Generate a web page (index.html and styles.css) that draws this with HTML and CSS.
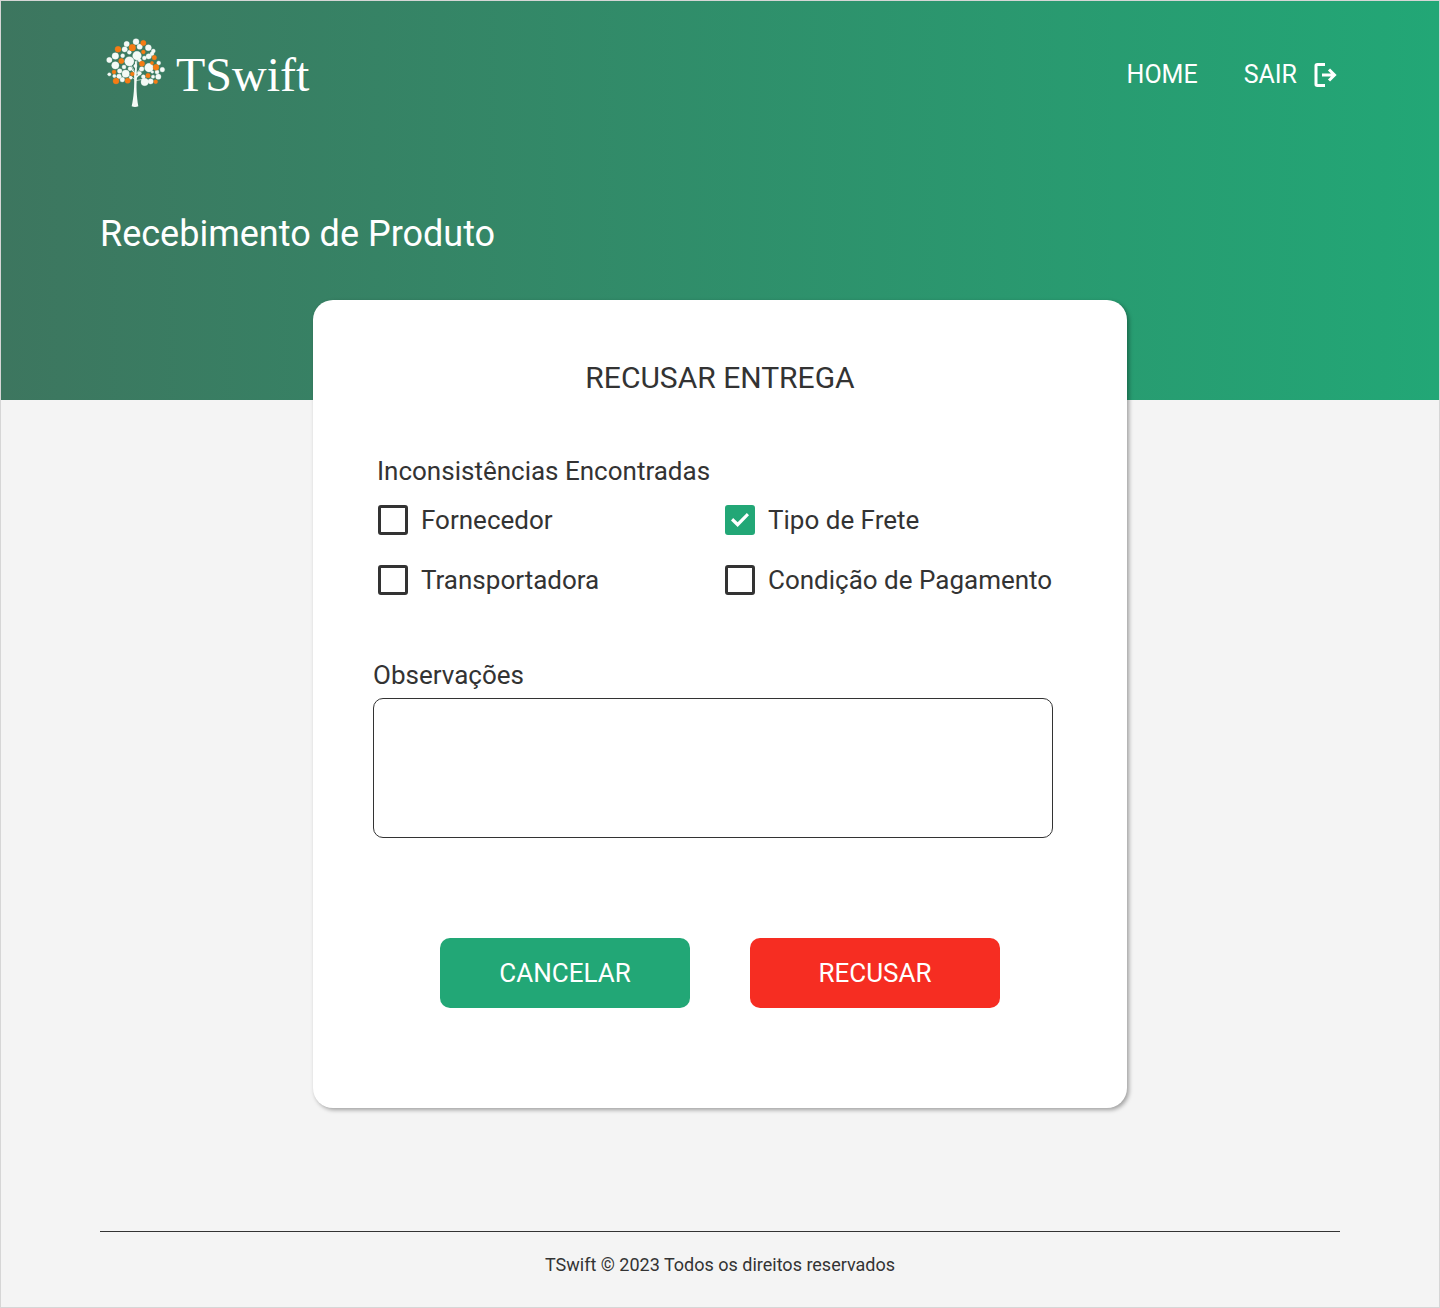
FILE: index.html
```html
<!DOCTYPE html>
<html lang="pt-BR">
<head>
  <meta charset="utf-8">
  <meta name="viewport" content="width=device-width, initial-scale=1">
  <title>TSwift - Recebimento de Produto</title>
  <link rel="stylesheet" href="styles.css">
</head>
<body>
  <header class="hero">
    <div class="topbar">
      <a class="brand" href="#">
        <svg class="brand-tree" viewBox="0 9 210 228" aria-hidden="true">
          <path class="trunk" d="M102 122c2 34-1 68-7 95 6 3 14 3 20 0-5-30-7-62-4-86l14-14-3-3-12 12V82h-5v34L92 98l-3 3 13 16z"/>
          <path class="twigs" d="M105 136L78 119M107 140l26-5M106 122l20-24M104 113L88 84M108 112l4-46"/>
          <g class="leaf">
            <circle cx="80" cy="30" r="8"/><circle cx="108" cy="23" r="9"/><circle cx="74" cy="46" r="8"/>
            <circle cx="119" cy="38" r="8"/><circle cx="145" cy="41" r="9"/><circle cx="160" cy="51" r="6"/>
            <circle cx="88" cy="55" r="6"/><circle cx="46" cy="66" r="10"/><circle cx="28" cy="78" r="8"/>
            <circle cx="68" cy="65" r="6"/><circle cx="111" cy="65" r="13"/><circle cx="88" cy="82" r="14"/>
            <circle cx="46" cy="94" r="11"/><circle cx="146" cy="67" r="8"/><circle cx="156" cy="59" r="6"/>
            <circle cx="133" cy="72" r="6"/><circle cx="119" cy="79" r="5"/><circle cx="147" cy="101" r="13"/>
            <circle cx="176" cy="87" r="6"/><circle cx="187" cy="107" r="7"/><circle cx="171" cy="114" r="6"/>
            <circle cx="175" cy="128" r="8"/><circle cx="159" cy="128" r="5"/><circle cx="134" cy="144" r="11"/>
            <circle cx="152" cy="142" r="8"/><circle cx="77" cy="119" r="11"/><circle cx="59" cy="111" r="7"/>
            <circle cx="72" cy="99" r="6"/><circle cx="90" cy="104" r="6"/><circle cx="28" cy="121" r="5"/>
            <circle cx="43" cy="126" r="5"/><circle cx="57" cy="127" r="7"/><circle cx="67" cy="137" r="7"/>
            <circle cx="125" cy="105" r="7"/><circle cx="118" cy="118" r="6"/><circle cx="130" cy="128" r="6"/>
            <circle cx="106" cy="96" r="5"/><circle cx="92" cy="131" r="5"/><circle cx="157" cy="114" r="4"/>
          </g>
          <g class="fruit">
            <circle cx="54" cy="46" r="9"/><circle cx="97" cy="41" r="10"/><circle cx="130" cy="27" r="8"/>
            <circle cx="130" cy="54" r="6"/><circle cx="163" cy="71" r="7"/><circle cx="64" cy="81" r="8"/>
            <circle cx="126" cy="89" r="8"/><circle cx="156" cy="87" r="5"/><circle cx="168" cy="100" r="9"/>
            <circle cx="42" cy="114" r="6"/><circle cx="97" cy="120" r="6"/><circle cx="144" cy="125" r="7"/>
            <circle cx="48" cy="141" r="9"/><circle cx="83" cy="140" r="8"/><circle cx="167" cy="143" r="6"/>
          </g>
        </svg>
        <span class="brand-name">TSwift</span>
      </a>
      <nav class="menu">
        <a class="menu-link" href="#">HOME</a>
        <a class="menu-link" href="#">SAIR
          <svg class="exit-icon" viewBox="0 0 24 26" aria-hidden="true">
            <path d="M12 2.500H4.200Q3 2.500 3 3.700V22.300Q3 23.500 4.200 23.500H12M9 13H21M16 7.500L21.500 13L16 18.500"/>
          </svg>
        </a>
      </nav>
    </div>
    <h1 class="page-title">Recebimento de Produto</h1>
  </header>

  <main class="content">
    <form class="card">
      <h2 class="card-title">RECUSAR ENTREGA</h2>
      <fieldset class="issues">
        <legend class="issues-title">Inconsistências Encontradas</legend>
        <div class="options">
          <label class="option"><input class="check" type="checkbox">Fornecedor</label>
          <label class="option"><input class="check" type="checkbox" checked>Tipo de Frete</label>
          <label class="option"><input class="check" type="checkbox">Transportadora</label>
          <label class="option"><input class="check" type="checkbox">Condição de Pagamento</label>
        </div>
      </fieldset>
      <label class="notes-label" for="notes">Observações</label>
      <textarea class="notes" id="notes"></textarea>
      <div class="actions">
        <button class="button" type="button">CANCELAR</button>
        <button class="button button-danger" type="submit">RECUSAR</button>
      </div>
    </form>
  </main>

  <footer class="footer">TSwift © 2023 Todos os direitos reservados</footer>
</body>
</html>
```

FILE: styles.css
```css
* {
  box-sizing: border-box;
}

body {
  margin: 0;
  min-height: 100vh;
  display: flex;
  flex-direction: column;
  border: 1px solid #d6d6d6;
  background: #f4f4f4;
  color: #333;
  font-family: Roboto, "Liberation Sans", sans-serif;
  font-size: 26px;
  line-height: 30px;
}

a {
  color: inherit;
  text-decoration: none;
}

.hero {
  padding: 36px 99px 144px;
  background: linear-gradient(90deg, #3d765f, #22a776);
  color: #fff;
}

.topbar {
  display: flex;
  justify-content: space-between;
  align-items: center;
}

.brand {
  display: flex;
  align-items: center;
  gap: 6px;
}

.brand-tree {
  width: 70px;
  height: 76px;
}

.trunk,
.leaf {
  fill: #f4faf6;
}

.twigs {
  stroke: #f4faf6;
  stroke-width: 2;
}

.leaf {
  stroke: #f4faf6;
}

.fruit {
  fill: #f57c14;
  stroke: #f57c14;
}

.brand-name {
  font-family: "Liberation Serif", serif;
  font-size: 48px;
  line-height: 56px;
}

.menu {
  display: flex;
  gap: 46px;
}

.menu-link {
  display: flex;
  align-items: center;
  gap: 16px;
  font-size: 25px;
}

.exit-icon {
  width: 24px;
  height: 26px;
  margin-right: 3px;
  fill: none;
  stroke: #fff;
  stroke-width: 3;
}

.page-title {
  margin: 100px 0 0;
  font-size: 36px;
  font-weight: 400;
  line-height: 43px;
}

.content {
  flex: 1;
  padding: 0 20px;
}

.card {
  max-width: 814px;
  margin: -100px auto 0;
  padding: 60px 60px 100px;
  border-radius: 20px;
  background: #fff;
  box-shadow: 2px 2px 4px rgba(0, 0, 0, 0.35);
}

.card-title {
  margin: 0 0 60px;
  font-size: 30px;
  font-weight: 400;
  line-height: 36px;
  text-align: center;
}

.issues {
  margin: 0 0 65px;
  padding: 0 0 0 4px;
  border: 0;
}

.issues-title {
  padding: 0;
}

.options {
  display: grid;
  grid-template-columns: repeat(2, 1fr);
  gap: 30px 4px;
  padding-top: 19px;
}

.option {
  display: flex;
  align-items: center;
  gap: 13px;
  white-space: nowrap;
}

.check {
  appearance: none;
  display: grid;
  place-content: center;
  flex: none;
  width: 30px;
  height: 30px;
  margin: 0 0 0 1px;
  border: 3px solid #333;
  border-radius: 3px;
}

.check:checked {
  border-color: #22a776;
  background: #22a776;
}

.check:checked::before {
  content: "";
  width: 18px;
  height: 14px;
  background: #fff;
  clip-path: polygon(0 53%, 12% 36%, 37% 66%, 88% 0, 100% 16%, 37% 100%);
}

.notes-label {
  display: block;
  margin-bottom: 8px;
}

.notes {
  display: block;
  width: 100%;
  max-width: 680px;
  height: 140px;
  padding: 12px;
  border: 1px solid #333;
  border-radius: 10px;
  background: #fff;
  color: inherit;
  font: inherit;
  resize: none;
}

.actions {
  display: flex;
  flex-wrap: wrap;
  justify-content: center;
  gap: 60px;
  margin-top: 100px;
}

.button {
  width: 250px;
  height: 70px;
  border: 0;
  border-radius: 10px;
  background: #22a776;
  color: #fff;
  font: inherit;
}

.button-danger {
  background: #f62d22;
}

.footer {
  margin: 0 99px;
  padding: 23px 0 32px;
  border-top: 1px solid #333;
  font-size: 18px;
  line-height: 20px;
  text-align: center;
}
```
